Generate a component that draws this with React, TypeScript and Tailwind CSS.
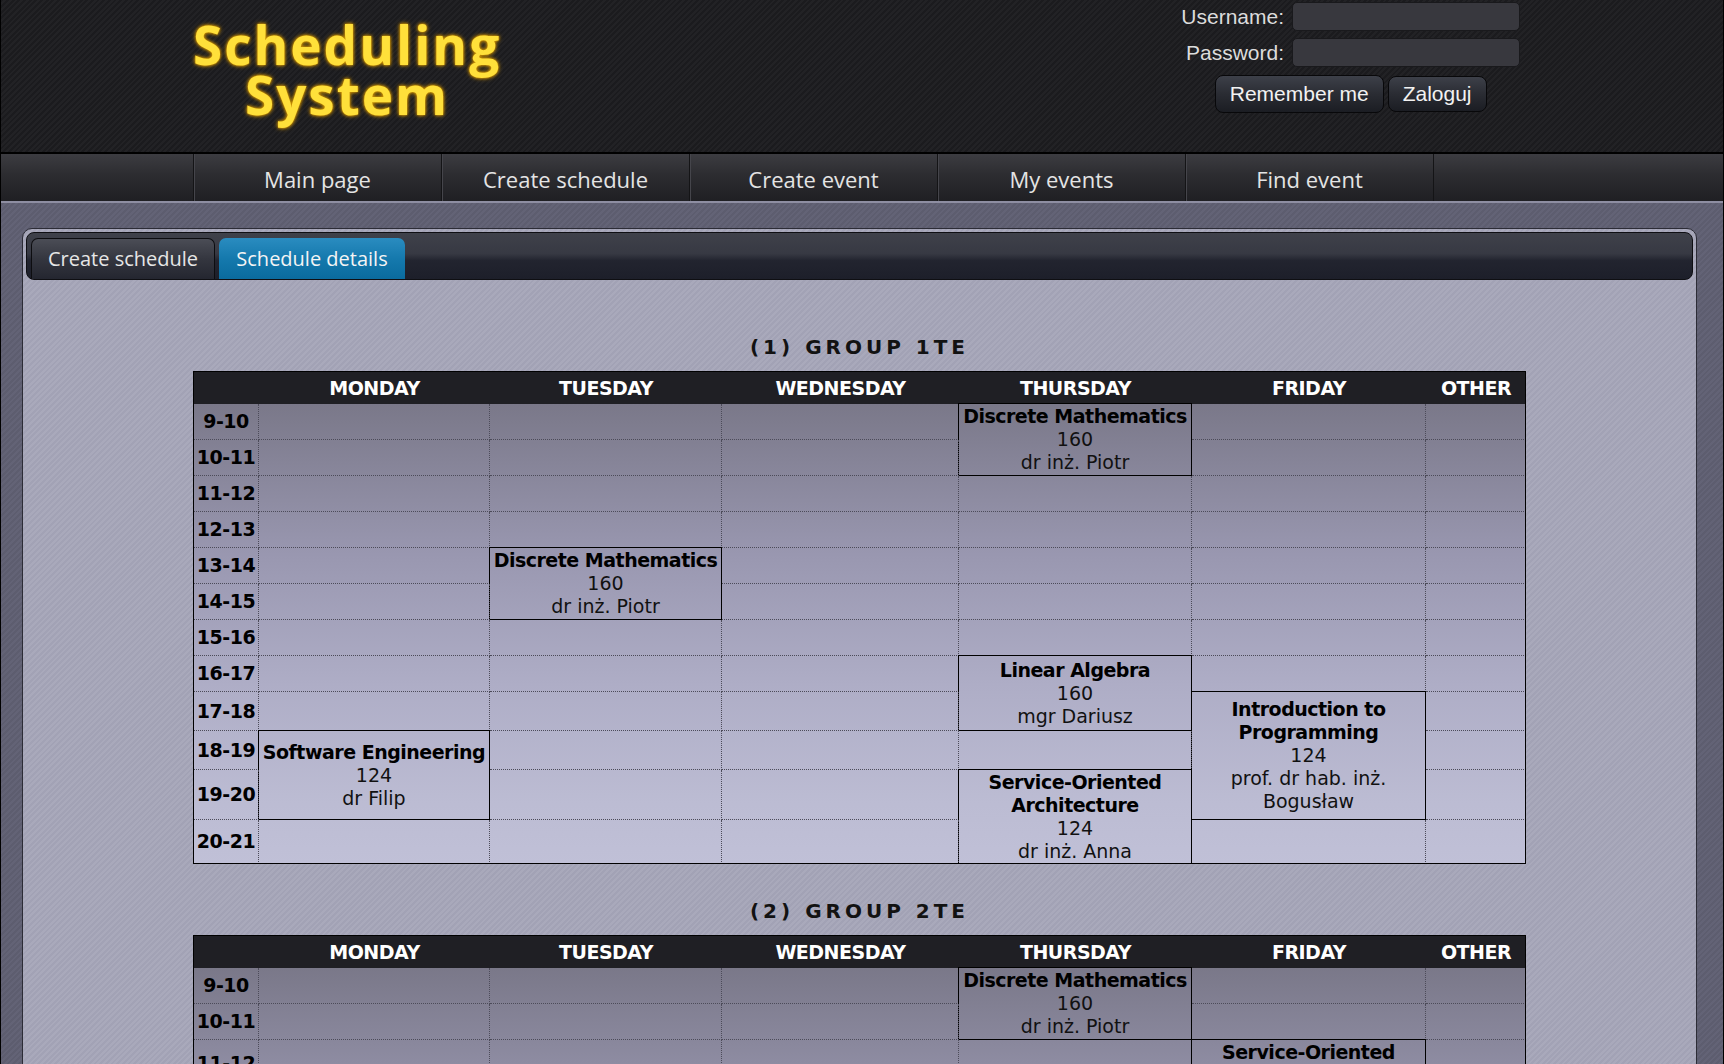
import React from 'react';

type Ev = {
  row: number;
  col: number;
  span: number;
  title: string[];
  room: string;
  teacher: string[];
};

const days = ['MONDAY', 'TUESDAY', 'WEDNESDAY', 'THURSDAY', 'FRIDAY', 'OTHER'];
const hours = ['9-10', '10-11', '11-12', '12-13', '13-14', '14-15', '15-16', '16-17', '17-18', '18-19', '19-20', '20-21'];
const navItems = ['Main page', 'Create schedule', 'Create event', 'My events', 'Find event'];

const spanClass: Record<number, string> = {
  1: 'row-span-1',
  2: 'row-span-2',
  3: 'row-span-3',
};

const group1: Ev[] = [
  { row: 0, col: 3, span: 2, title: ['Discrete Mathematics'], room: '160', teacher: ['dr inż. Piotr'] },
  { row: 4, col: 1, span: 2, title: ['Discrete Mathematics'], room: '160', teacher: ['dr inż. Piotr'] },
  { row: 7, col: 3, span: 2, title: ['Linear Algebra'], room: '160', teacher: ['mgr Dariusz'] },
  { row: 8, col: 4, span: 3, title: ['Introduction to', 'Programming'], room: '124', teacher: ['prof. dr hab. inż.', 'Bogusław'] },
  { row: 9, col: 0, span: 2, title: ['Software Engineering'], room: '124', teacher: ['dr Filip'] },
  { row: 10, col: 3, span: 2, title: ['Service-Oriented', 'Architecture'], room: '124', teacher: ['dr inż. Anna'] },
];

const group2: Ev[] = [
  { row: 0, col: 3, span: 2, title: ['Discrete Mathematics'], room: '160', teacher: ['dr inż. Piotr'] },
  { row: 2, col: 4, span: 2, title: ['Service-Oriented', 'Architecture'], room: '124', teacher: ['dr inż. Anna'] },
  { row: 6, col: 1, span: 2, title: ['Linear Algebra'], room: '160', teacher: ['mgr Dariusz'] },
  { row: 9, col: 0, span: 2, title: ['Software Engineering'], room: '124', teacher: ['dr Filip'] },
];

function EventCell({ ev }: { ev: Ev }) {
  return (
    <div
      className={`${spanClass[ev.span]} -mt-px -ml-px border border-black flex flex-col items-center justify-center text-center leading-[23px] text-[#111]`}
    >
      {ev.title.map((t) => (
        <div key={t} className="whitespace-nowrap font-bold tracking-[-0.5px] text-black">
          {t}
        </div>
      ))}
      <div className="whitespace-nowrap">{ev.room}</div>
      {ev.teacher.map((t) => (
        <div key={t} className="whitespace-nowrap">
          {t}
        </div>
      ))}
    </div>
  );
}

function ScheduleTable({ events, rowsClass }: { events: Ev[]; rowsClass: string }) {
  const covered = (r: number, c: number) =>
    events.some((e) => e.col === c && r > e.row && r < e.row + e.span);

  const cells: React.ReactNode[] = [];
  hours.forEach((h, r) => {
    cells.push(
      <div
        key={`h${r}`}
        className="flex items-center justify-center border-r border-b border-dotted border-[#4c4b59] font-bold tracking-[-0.5px] text-black"
      >
        {h}
      </div>
    );
    days.forEach((_, c) => {
      const ev = events.find((e) => e.row === r && e.col === c);
      if (ev) {
        cells.push(<EventCell key={`e${r}-${c}`} ev={ev} />);
      } else if (!covered(r, c)) {
        cells.push(<div key={`c${r}-${c}`} className="border-r border-b border-dotted border-[#4c4b59]" />);
      }
    });
  });

  return (
    <div className="mx-auto w-[1333px] overflow-hidden border border-black font-['DejaVu_Sans',Verdana,sans-serif] text-[19px]">
      <div className="grid h-[32px] grid-cols-[65px_231px_232px_237px_233px_234px_100px] bg-[#1f1f24] font-bold tracking-[-0.5px] text-white">
        <div />
        {days.map((d) => (
          <div key={d} className="flex items-center justify-center">
            {d}
          </div>
        ))}
      </div>
      <div
        className={`-mb-px grid grid-cols-[65px_231px_232px_237px_233px_234px_100px] ${rowsClass} bg-[linear-gradient(180deg,#7a7889_0px,#9997b0_150px,#aeadc6_280px,#bcbcd3_400px,#c0c0d7_460px)]`}
      >
        {cells}
      </div>
    </div>
  );
}

function GroupSection({ title, events, rowsClass, first }: { title: string; events: Ev[]; rowsClass: string; first?: boolean }) {
  return (
    <section className={first ? 'mt-[55px]' : 'mt-[35px]'}>
      <h2 className="mb-[12px] text-center font-['DejaVu_Sans',Verdana,sans-serif] text-[20px] font-bold leading-[24px] tracking-[4px] text-[#121212]">
        {title}
      </h2>
      <ScheduleTable events={events} rowsClass={rowsClass} />
    </section>
  );
}

export default function App() {
  return (
    <div className="min-h-screen w-[1724px] border-x border-black bg-[repeating-linear-gradient(135deg,#5d5d6f_0px,#5d5d6f_2px,#636376_2px,#636376_4px)]">
      {/* Header */}
      <header className="flex h-[154px] border-b-2 border-black bg-[repeating-linear-gradient(135deg,#1b1b1e_0px,#1b1b1e_2px,#222225_2px,#222225_4px)]">
        <div className="ml-[192px] mt-[20px] flex flex-col items-center font-['Open_Sans',sans-serif] text-[53px] font-bold leading-[50px] tracking-[2px] text-[#ffe03a] [text-shadow:0_0_1px_#a86f00,0_0_3px_#e3a400,0_0_5px_#c78c00]">
          <span>Scheduling</span>
          <span>System</span>
        </div>
        <div className="ml-auto mr-[203px] mt-[2px] flex flex-col items-center font-['Liberation_Sans',Arial,sans-serif] text-[21px]">
          <div className="grid grid-cols-[auto_228px] items-center gap-x-[8px] gap-y-[7px]">
            <label className="text-right leading-none text-[#dcdcdc]">Username:</label>
            <input className="h-[29px] rounded-[5px] border border-[#19191c] bg-[#38383e] outline-none" />
            <label className="text-right leading-none text-[#dcdcdc]">Password:</label>
            <input type="password" className="h-[29px] rounded-[5px] border border-[#19191c] bg-[#38383e] outline-none" />
          </div>
          <div className="mt-[8px] flex items-center gap-[4px]">
            <button className="h-[38px] rounded-[8px] border border-[#08080a] bg-[linear-gradient(180deg,#3d4049_0%,#2a2c33_50%,#1b1d23_100%)] px-[14px] text-[#f2f2f2]">
              Remember me
            </button>
            <button className="h-[36px] rounded-[8px] border border-[#08080a] bg-[linear-gradient(180deg,#3d4049_0%,#2a2c33_50%,#1b1d23_100%)] px-[14px] text-[#f2f2f2]">
              Zaloguj
            </button>
          </div>
        </div>
      </header>

      {/* Navigation */}
      <nav className="flex h-[47px] bg-[linear-gradient(180deg,#3c3c41_0%,#2c2c30_45%,#1f1f23_100%)] font-['Open_Sans',sans-serif]">
        <div className="ml-[192px] flex border-l border-[#141416]">
          {navItems.map((item) => (
            <a
              key={item}
              className="flex w-[248px] items-center justify-center border-r border-[#141416] pt-[3px] text-[22px] text-[#e4e4e4] shadow-[inset_1px_0_0_#45454b]"
            >
              {item}
            </a>
          ))}
        </div>
      </nav>
      <div className="h-[2px] bg-[#8e8ea2]" />

      {/* Content panel */}
      <main className="ml-[21px] mt-[25px] w-[1675px] rounded-t-[10px] border border-[#2c2c36] bg-[repeating-linear-gradient(135deg,#a2a2b5_0px,#a2a2b5_2px,#a9a9bb_2px,#a9a9bb_4px)] p-[3px] pb-[60px]">
        <div className="flex h-[48px] items-end rounded-[8px] border border-[#0f0f13] bg-[linear-gradient(180deg,#3f414a_0%,#373943_45%,#22242f_60%,#1d1f2a_100%)] pl-[4px] font-['Open_Sans',sans-serif] text-[20px]">
          <div className="flex h-[41px] w-[184px] items-center justify-center rounded-t-[7px] border border-b-0 border-[#0d0d10] bg-[linear-gradient(180deg,#4b4d56_0%,#34363f_50%,#242630_100%)] text-[#e6e6e6]">
            Create schedule
          </div>
          <div className="ml-[4px] flex h-[41px] w-[186px] items-center justify-center rounded-t-[7px] bg-[linear-gradient(180deg,#2a8cc0_0%,#1579ad_50%,#0a6b9e_100%)] text-[#f4f4f4]">
            Schedule details
          </div>
        </div>

        <GroupSection
          first
          title="(1) GROUP 1TE"
          events={group1}
          rowsClass="grid-rows-[36px_36px_36px_36px_36px_36px_36px_36px_39px_39px_50px_44px]"
        />
        <GroupSection
          title="(2) GROUP 2TE"
          events={group2}
          rowsClass="grid-rows-[36px_36px_47px_47px_36px_36px_36px_36px_36px_36px_36px_36px]"
        />
      </main>
    </div>
  );
}
